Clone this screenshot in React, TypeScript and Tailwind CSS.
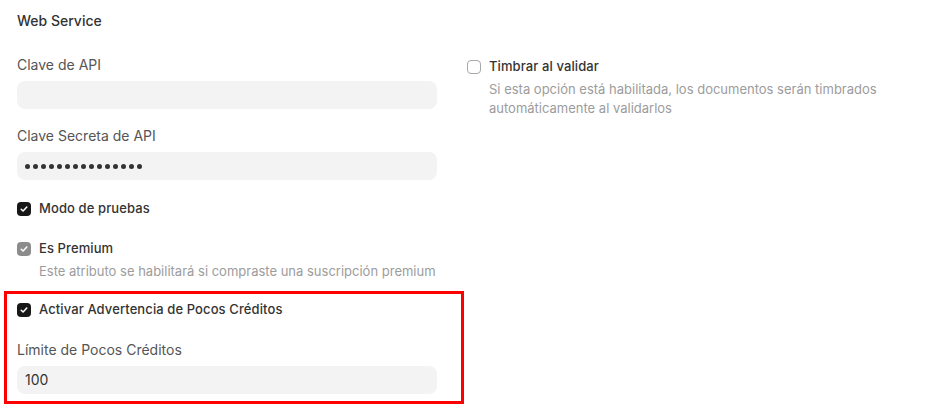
import type { ReactNode } from "react";

function Check({ tone = "dark" }: { tone?: "dark" | "muted" | "off" }) {
  if (tone === "off") {
    return <span className="block size-[14px] shrink-0 rounded-[4px] border border-[#a8a8a8] bg-white" />;
  }
  return (
    <span
      className={`flex size-[14px] shrink-0 items-center justify-center rounded-[4px] ${
        tone === "dark" ? "bg-[#171717]" : "bg-[#8c8c8c]"
      }`}
    >
      <svg viewBox="0 0 14 14" className="size-[14px]" fill="none">
        <path d="M4.2 7.2 6.1 9l3.7-4" stroke="white" strokeWidth="1.5" strokeLinecap="round" strokeLinejoin="round" />
      </svg>
    </span>
  );
}

function CheckRow({ label, tone, className = "" }: { label: string; tone?: "dark" | "muted" | "off"; className?: string }) {
  return (
    <div className={`flex h-5 items-center gap-2 ${className}`}>
      <Check tone={tone} />
      <span className="text-[13px] font-medium tracking-[0.1px] text-[#333]">{label}</span>
    </div>
  );
}

function Field({ label, children, className = "" }: { label: string; children?: ReactNode; className?: string }) {
  return (
    <div className={className}>
      <div className="text-sm leading-5 text-[#555]">{label}</div>
      <div className="mt-[6px] flex h-7 items-center rounded-lg bg-[#f3f3f3] px-2 text-sm text-[#333]">
        {children}
      </div>
    </div>
  );
}

function Dots({ count }: { count: number }) {
  return (
    <div className="flex gap-[3px]">
      {Array.from({ length: count }).map((_, i) => (
        <span key={i} className="block size-[5px] rounded-full bg-[#333]" />
      ))}
    </div>
  );
}

export default function App() {
  return (
    <div className="h-[408px] w-[947px] overflow-hidden bg-white pl-[17px] pt-[11px] font-['Inter',sans-serif]">
      <h3 className="text-sm leading-5 font-medium text-[#333]">Web Service</h3>

      <div className="mt-6 flex gap-[30px]">
        {/* left column */}
        <div className="w-[420px]">
          <Field label="Clave de API" />
          <Field label="Clave Secreta de API" className="mt-[17px]">
            <Dots count={15} />
          </Field>

          <CheckRow label="Modo de pruebas" className="mt-[19px]" />

          <CheckRow label="Es Premium" tone="muted" className="mt-5" />
          <p className="mt-[3px] pl-[22px] text-[13px] leading-[18px] text-[#9c9c9c]">
            Este atributo se habilitará si compraste una suscripción premium
          </p>

          <div className="relative mt-5">
            <CheckRow label="Activar Advertencia de Pocos Créditos" />
            <Field label="Límite de Pocos Créditos" className="mt-5">
              100
            </Field>
            <div className="pointer-events-none absolute -top-[9px] -right-[27px] -bottom-[10px] -left-[13px] border-[3px] border-[#ff0000]" />
          </div>
        </div>

        {/* right column */}
        <div className="w-[420px] pt-[2px]">
          <CheckRow label="Timbrar al validar" tone="off" />
          <p className="mt-[3px] pl-[22px] text-[13px] leading-[19px] text-[#9c9c9c]">
            Si esta opción está habilitada, los documentos serán timbrados automáticamente al validarlos
          </p>
        </div>
      </div>
    </div>
  );
}
